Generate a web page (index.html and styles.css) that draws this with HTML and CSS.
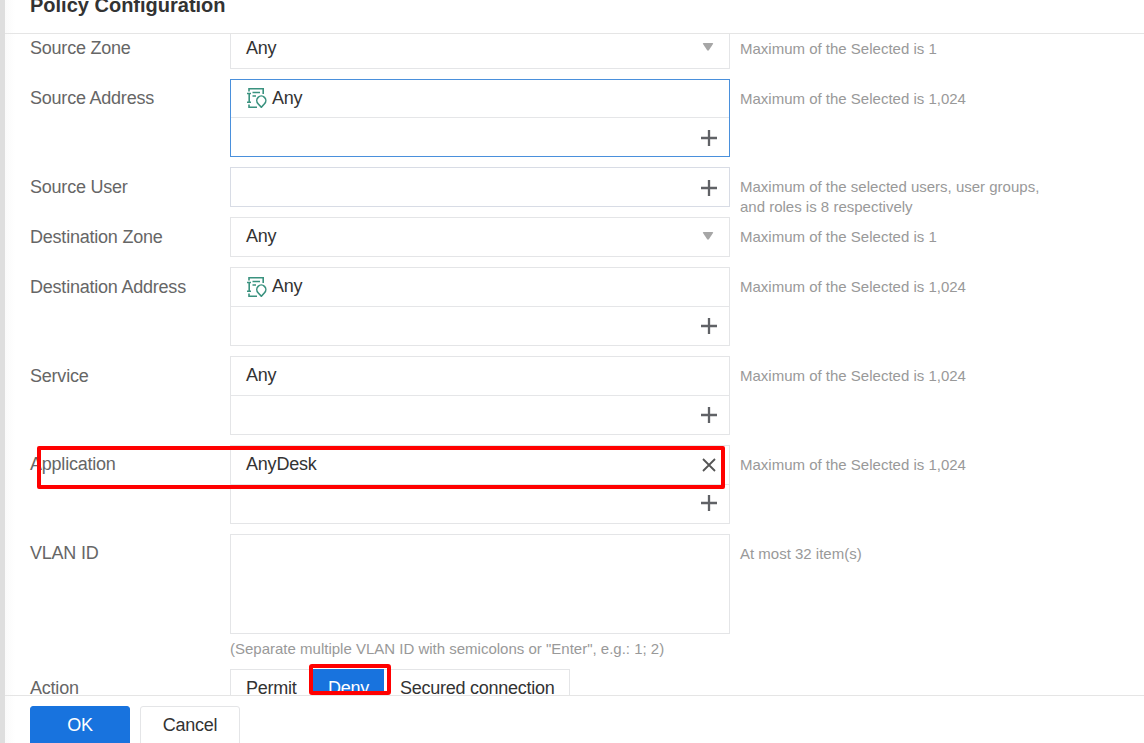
FILE: index.html
```html
<!DOCTYPE html>
<html lang="en">
<head>
<meta charset="utf-8">
<title>Policy Configuration</title>
<link rel="stylesheet" href="styles.css">
</head>
<body>
<svg class="defs" aria-hidden="true">
  <symbol id="plus" viewBox="0 0 16 16"><path d="M8 0v16M0 8h16" fill="none" stroke="#606266" stroke-width="2.3"/></symbol>
  <symbol id="close" viewBox="0 0 14 14"><path d="M1 1l12 12M13 1L1 13" fill="none" stroke="#555" stroke-width="1.8"/></symbol>
  <symbol id="arrow" viewBox="0 0 12 8"><path d="M1.5 0h9q1 0 .5 1L7 7Q6 8.500 5 7L1 1Q.5 0 1.500 0z" fill="#a6a6a6"/></symbol>
  <symbol id="address" viewBox="0 0 20 20"><g fill="none" stroke="#3a927f" stroke-width="1.6"><path d="M2 3.500V.8h14.200V6M2.200 6v8M2 16.500v2.700h8"/><path d="M0 5.500h4M0 14.300h4M5.500 4.500h7.500M5.500 8h3.500"/><path d="M14.300 19.300l-3.200-3.600a4.500 4.500 0 1 1 6.400 0z"/></g></symbol>
</svg>
<div class="dialog">
  <header class="header"><h1 class="title">Policy Configuration</h1></header>
  <main class="form">
    <div class="row row-clipped">
      <div class="label">Source Zone</div>
      <div class="box select"><span class="value">Any</span><svg class="arrow"><use href="#arrow"/></svg></div>
      <div class="hint">Maximum of the Selected is 1</div>
    </div>
    <div class="row">
      <div class="label">Source Address</div>
      <div class="box focused">
        <div class="item"><svg class="address"><use href="#address"/></svg><span class="value">Any</span></div>
        <div class="add"><svg class="plus"><use href="#plus"/></svg></div>
      </div>
      <div class="hint">Maximum of the Selected is 1,024</div>
    </div>
    <div class="row low">
      <div class="label">Source User</div>
      <div class="box user"><div class="add"><svg class="plus"><use href="#plus"/></svg></div></div>
      <div class="hint">Maximum of the selected users, user groups,<br>and roles is 8 respectively</div>
    </div>
    <div class="row low">
      <div class="label">Destination Zone</div>
      <div class="box select"><span class="value">Any</span><svg class="arrow"><use href="#arrow"/></svg></div>
      <div class="hint">Maximum of the Selected is 1</div>
    </div>
    <div class="row low">
      <div class="label">Destination Address</div>
      <div class="box list">
        <div class="item"><svg class="address"><use href="#address"/></svg><span class="value">Any</span></div>
        <div class="add"><svg class="plus"><use href="#plus"/></svg></div>
      </div>
      <div class="hint">Maximum of the Selected is 1,024</div>
    </div>
    <div class="row low">
      <div class="label">Service</div>
      <div class="box list">
        <div class="item"><span class="value">Any</span></div>
        <div class="add"><svg class="plus"><use href="#plus"/></svg></div>
      </div>
      <div class="hint">Maximum of the Selected is 1,024</div>
    </div>
    <div class="row">
      <div class="label">Application</div>
      <div class="box list app">
        <div class="item"><span class="value">AnyDesk</span><svg class="close"><use href="#close"/></svg></div>
        <div class="add"><svg class="plus"><use href="#plus"/></svg></div>
      </div>
      <div class="hint">Maximum of the Selected is 1,024</div>
      <div class="mark mark-app"></div>
    </div>
    <div class="row vlan">
      <div class="label">VLAN ID</div>
      <div class="field">
        <div class="box textarea"></div>
        <div class="note">(Separate multiple VLAN ID with semicolons or "Enter", e.g.: 1; 2)</div>
      </div>
      <div class="hint">At most 32 item(s)</div>
    </div>
    <div class="row">
      <div class="label">Action</div>
      <div class="segments">
        <span class="segment permit">Permit</span>
        <span class="segment active">Deny</span>
        <span class="segment secured">Secured connection</span>
      </div>
      <div class="mark mark-deny"></div>
    </div>
  </main>
  <footer class="footer"><button class="btn primary">OK</button><button class="btn">Cancel</button></footer>
</div>
</body>
</html>
```

FILE: styles.css
```css
* { box-sizing: border-box; }
body { margin: 0; background: #fff; font-family: "Liberation Sans", Arial, sans-serif; font-size: 18px; color: #333; }
.defs { display: none; }
svg { display: block; flex: none; }
.dialog { height: 743px; border-left: 5px solid #dedede; display: flex; flex-direction: column; overflow: hidden; background: linear-gradient(90deg, #fafafa, #fff 10px); }
.header { height: 34px; flex: none; border-bottom: 1px solid #e5e5e5; padding-left: 25px; overflow: hidden; }
.title { margin: -8px 0 0; font-size: 20px; line-height: 26px; font-weight: 700; color: #333; white-space: nowrap; }
.form { flex: none; height: 661px; overflow: hidden; padding-left: 25px; display: flex; flex-direction: column; gap: 10px; }
.row { display: grid; grid-template-columns: 200px 500px 360px; align-items: start; position: relative; flex: none; }
.row-clipped { margin-top: -5px; }
.label { line-height: 20px; padding-top: 9px; color: #666; white-space: nowrap; letter-spacing: -0.22px; }
.low .label { padding-top: 10px; }
.hint { padding: 10px 0 0 10px; margin-bottom: -20px; font-size: 15px; line-height: 20px; color: #999; white-space: nowrap; }
.box { border: 1px solid #e4e5e7; background: #fff; }
.select { height: 40px; padding: 0 15px; display: flex; justify-content: space-between; }
.value { line-height: 20px; padding-top: 8px; white-space: nowrap; letter-spacing: -0.2px; }
.arrow { width: 12px; height: 8px; margin: 14px 0 0; }
.row-clipped .arrow { margin-top: 13px; }
.item { height: 39px; border-bottom: 1px solid #e5e6e8; padding: 0 13px 0 15px; display: flex; }
.focused { border-color: #4a90dc; }
.focused .item { height: 38px; }
.address { width: 20px; height: 20px; margin: 8px 5px 0 1px; }
.low .address { margin-top: 9px; }
.close { width: 14px; height: 14px; margin: 12px 0 0 auto; }
.add { height: 38px; padding: 11px 12px 0 0; display: flex; justify-content: flex-end; }
.plus { width: 16px; height: 16px; }
.focused .add { padding-top: 12px; }
.user { border-color: #d8dce5; }
.user .add { padding-top: 12px; }
.app .add { padding-top: 10px; }
.textarea { height: 100px; }
.note { height: 35px; padding-top: 5px; margin-bottom: -10px; line-height: 20px; font-size: 15px; color: #999; white-space: nowrap; }
.segments { width: 340px; height: 40px; border: 1px solid #e4e5e7; display: flex; background: #fff; }
.segment { flex: none; line-height: 20px; padding: 8px 15px 0; white-space: nowrap; letter-spacing: -0.25px; }
.permit { width: 82px; }
.active { width: 71px; margin-top: -1px; padding-top: 9px; background: #1873de; color: #fff; }
.secured { padding: 8px 0 0 16px; }
.mark { position: absolute; border: 4px solid #f00; border-radius: 2px; }
.mark-app { left: 7px; top: 1px; width: 688px; height: 43px; }
.mark-deny { left: 279px; top: -5px; width: 82px; height: 31px; border-radius: 3px; }
.footer { flex: none; height: 48px; border-top: 1px solid #e5e5e5; padding: 10px 0 0 25px; display: flex; gap: 10px; }
.btn { flex: none; width: 100px; height: 40px; padding: 0 0 2px; border: 1px solid #e4e5e7; border-radius: 3px; background: #fff; color: #333; font: 18px/36px "Liberation Sans", Arial, sans-serif; letter-spacing: -0.25px; }
.primary { background: #1873de; border-color: #1873de; color: #fff; }
```
